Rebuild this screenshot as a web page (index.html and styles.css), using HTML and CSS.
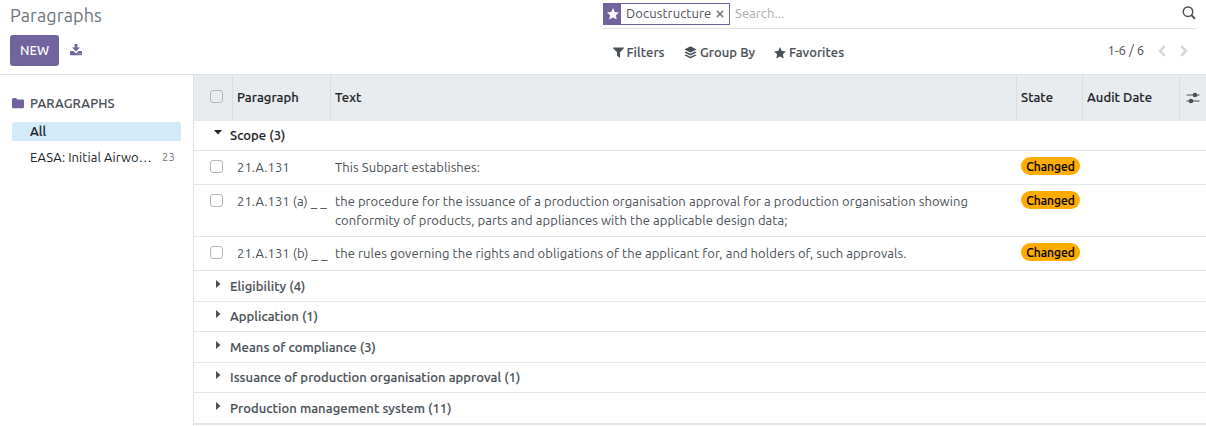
FILE: index.html
```html
<!DOCTYPE html>
<html lang="en">
<head>
<meta charset="utf-8">
<title>Paragraphs</title>
<link rel="stylesheet" href="styles.css">
</head>
<body>
<header class="control-panel">
  <div class="panel-left">
    <h1 class="title">Paragraphs</h1>
    <div class="actions">
      <button class="btn-new">NEW</button>
      <svg class="download" width="12" height="12" viewBox="0 0 12 12"><path fill="currentColor" d="M4.600 0h2.800v3.600h2.600L6 7.600 2 3.600h2.600zM.7 7h2.700L6 9.400 8.600 7h2.700q.7 0 .7.7v2.900q0 .7-.7.7H.7q-.7 0-.7-.7V7.700q0-.7.7-.7zm7.100 2.500v.8h.9v-.8zm1.900 0v.8h.9v-.8z"/></svg>
    </div>
  </div>
  <div class="panel-right">
    <div class="search">
      <div class="facet">
        <span class="facet-icon"><svg width="12" height="12" viewBox="0 0 12 12"><path fill="currentColor" d="M6 0 7.800 3.900l4.200.5-3.100 2.900.8 4.300L6 9.500l-3.700 2.100.8-4.300L0 4.400l4.200-.5z"/></svg></span>
        <span class="facet-label">Docustructure</span>
        <svg class="facet-close" width="8" height="8" viewBox="0 0 8 8"><path stroke="currentColor" stroke-width="1.600" d="m.9.9 6.200 6.200M7.100.9.9 7.100"/></svg>
      </div>
      <span class="placeholder">Search...</span>
      <svg class="magnifier" width="14" height="14" viewBox="0 0 14 14"><circle cx="6" cy="5.700" r="4.700" fill="none" stroke="currentColor" stroke-width="1.500"/><path stroke="currentColor" stroke-width="1.900" d="m9.300 9 3.800 3.800"/></svg>
    </div>
    <div class="toolbar">
      <div class="menu filters"><svg width="11" height="11" viewBox="0 0 11 11"><path fill="currentColor" d="M.4.500h10.200q.5.400.1.900L7 5.200v5.300q-.3.500-.8.100L4.200 8.800q-.2-.2-.2-.5V5.200L.3 1.400Q-.1.900.4.500z"/></svg><span>Filters</span></div>
      <div class="menu groupby"><svg width="13" height="13" viewBox="0 0 13 13"><path fill="currentColor" d="M6.500.3 12.600 3.500 6.500 6.600.4 3.500zM2 5.500l4.500 2.300L11 5.500l1.600.9-6.100 3.100L.4 6.400zM2 8.400l4.500 2.300L11 8.400l1.600.9-6.100 3.200L.4 9.300z"/></svg><span>Group By</span></div>
      <div class="menu favorites"><svg width="12" height="12" viewBox="0 0 12 12"><path fill="currentColor" d="M6 0 7.800 3.900l4.200.5-3.100 2.900.8 4.300L6 9.500l-3.700 2.100.8-4.300L0 4.400l4.200-.5z"/></svg><span>Favorites</span></div>
      <div class="pager">
        <span class="pager-text">1-6 / 6</span>
        <svg width="8" height="12" viewBox="0 0 8 12"><path fill="none" stroke="currentColor" stroke-width="2.600" d="M6.800 1.200 2 6l4.800 4.800"/></svg>
        <svg width="8" height="12" viewBox="0 0 8 12"><path fill="none" stroke="currentColor" stroke-width="2.600" d="M1.200 1.200 6 6l-4.800 4.800"/></svg>
      </div>
    </div>
  </div>
</header>
<div class="content">
  <aside class="sidebar">
    <div class="section"><svg width="12" height="11" viewBox="0 0 12 11"><path fill="currentColor" d="M1.300 0h2.400q1.300 0 1.300 1.500h5.700q1.300 0 1.300 1.300v6q0 1.500-1.300 1.500H1.300Q0 10.300 0 8.800V1.500Q0 0 1.300 0z"/></svg><span>PARAGRAPHS</span></div>
    <div class="category active"><span>All</span></div>
    <div class="category"><span class="category-name">EASA: Initial Airwo…</span><span class="count">23</span></div>
  </aside>
  <main class="list">
    <table class="table">
      <colgroup><col class="c-check"><col class="c-par"><col class="c-text"><col class="c-state"><col class="c-date"><col class="c-opt"></colgroup>
      <thead>
        <tr>
          <th class="check-cell"><span class="checkbox"></span></th>
          <th>Paragraph</th><th>Text</th><th>State</th><th>Audit Date</th>
          <th class="opt-cell"><svg width="14" height="12" viewBox="0 0 14 12"><path stroke="currentColor" stroke-width="1.200" d="M.5 3h13M.5 9h13"/><circle cx="9" cy="3" r="2.300" fill="currentColor"/><circle cx="5" cy="9" r="2.300" fill="currentColor"/></svg></th>
        </tr>
      </thead>
      <tbody>
        <tr class="group open"><td colspan="6"><div class="group-head"><svg class="caret" width="8" height="8" viewBox="0 0 8 8"><path fill="currentColor" d="M0 1h8L4 5.500z"/></svg><span>Scope (3)</span></div></td></tr>
        <tr class="record"><td class="check-cell"><span class="checkbox"></span></td><td>21.A.131</td><td>This Subpart establishes:</td><td><span class="badge">Changed</span></td><td></td><td></td></tr>
        <tr class="record tall"><td class="check-cell"><span class="checkbox"></span></td><td>21.A.131 (a) _ _</td><td>the procedure for the issuance of a production organisation approval for a production organisation showing<br>conformity of products, parts and appliances with the applicable design data;</td><td><span class="badge">Changed</span></td><td></td><td></td></tr>
        <tr class="record"><td class="check-cell"><span class="checkbox"></span></td><td>21.A.131 (b) _ _</td><td>the rules governing the rights and obligations of the applicant for, and holders of, such approvals.</td><td><span class="badge">Changed</span></td><td></td><td></td></tr>
        <tr class="group"><td colspan="6"><div class="group-head"><svg class="caret" width="8" height="8" viewBox="0 0 8 8"><path fill="currentColor" d="M2 0v8l4.500-4z"/></svg><span>Eligibility (4)</span></div></td></tr>
        <tr class="group short"><td colspan="6"><div class="group-head"><svg class="caret" width="8" height="8" viewBox="0 0 8 8"><path fill="currentColor" d="M2 0v8l4.500-4z"/></svg><span>Application (1)</span></div></td></tr>
        <tr class="group"><td colspan="6"><div class="group-head"><svg class="caret" width="8" height="8" viewBox="0 0 8 8"><path fill="currentColor" d="M2 0v8l4.500-4z"/></svg><span>Means of compliance (3)</span></div></td></tr>
        <tr class="group short"><td colspan="6"><div class="group-head"><svg class="caret" width="8" height="8" viewBox="0 0 8 8"><path fill="currentColor" d="M2 0v8l4.500-4z"/></svg><span>Issuance of production organisation approval (1)</span></div></td></tr>
        <tr class="group last"><td colspan="6"><div class="group-head"><svg class="caret" width="8" height="8" viewBox="0 0 8 8"><path fill="currentColor" d="M2 0v8l4.500-4z"/></svg><span>Production management system (11)</span></div></td></tr>
      </tbody>
    </table>
  </main>
</div>
</body>
</html>
```
FILE: styles.css
```css
* { box-sizing: border-box; }
body {
  margin: 0;
  height: 426px;
  overflow: hidden;
  background: #fff;
  color: #495057;
  font: 400 13px/19px "Ubuntu", "Noto Sans", "Open Sans", sans-serif;
  letter-spacing: 0.067px;
}
svg { display: block; flex: none; }
.control-panel {
  display: flex;
  height: 75px;
  border-bottom: 1px solid #dee2e6;
}
.panel-left { width: 603px; padding: 4px 0 0 10px; }
.title { margin: 0; color: #6c757d; font-size: 18px; line-height: 23px; font-weight: 400; letter-spacing: 0.1px; }
.actions { display: flex; align-items: center; margin-top: 8px; color: #71639e; }
.btn-new {
  width: 49px; height: 31px; padding: 0; border: 0; border-radius: 3px;
  background: #71639e; color: #fff;
  font: 500 13px/31px "Ubuntu", "Noto Sans", sans-serif;
}
.download { margin: -2px 0 0 11px; }
.panel-right { width: 593px; }
.search {
  display: flex; align-items: center;
  height: 29px; padding-bottom: 1px;
  border-bottom: 1px solid #dee2e6;
}
.facet { display: flex; align-items: center; width: 127px; height: 22px; border: 1px solid #71639e; }
.facet-icon { display: flex; align-items: center; justify-content: center; width: 17px; height: 20px; background: #71639e; color: #fff; }
.facet-label { width: 86px; margin-left: 5px; white-space: nowrap; letter-spacing: 0.1px; }
.facet-close { margin-left: 4px; color: #7c8187; }
.placeholder { margin-left: 5px; color: #a7acb1; }
.magnifier { margin-left: auto; margin-top: -2px; }
.toolbar { display: flex; align-items: center; height: 46px; padding: 1px 0 0 10px; }
.menu { display: flex; align-items: center; font-weight: 500; white-space: nowrap; gap: 3px; -webkit-text-stroke: 0.15px; }
.filters { width: 71px; gap: 2.500px; }
.groupby { width: 90px; }
.pager { display: flex; align-items: center; margin: -4px 8px 0 auto; gap: 14px; color: #d5d8dc; }
.pager-text { color: #495057; letter-spacing: 0; }
.content { display: flex; height: 351px; }
.sidebar { width: 193px; padding: 19px 12px 0; color: #212529; }
.section { display: flex; align-items: center; gap: 6px; height: 19px; color: #495057; font-weight: 500; letter-spacing: 0.1px; -webkit-text-stroke: 0.1px; }
.section svg { color: #71639e; }
.category { display: flex; align-items: center; height: 19px; margin-top: 7px; padding: 0 6px 0 18px; white-space: nowrap; }
.category.active { margin-top: 9px; background: #d3ebf9; border-radius: 3px 3px 0 0; font-weight: 500; -webkit-text-stroke: 0.15px; }
.category-name { letter-spacing: 0.067px; }
.count { margin-left: auto; color: #6c757d; font-size: 11px; letter-spacing: 0.3px; }
.list { flex: 1; border-left: 1px solid #dee2e6; }
.table { width: 1012px; table-layout: fixed; border-collapse: separate; border-spacing: 0; }
.c-check { width: 39px; }
.c-par { width: 98px; }
.c-text { width: 686px; }
.c-state { width: 66px; }
.c-date { width: 97px; }
.c-opt { width: 26px; }
.table th {
  height: 46px; padding: 0 4px 1px; text-align: left; vertical-align: middle;
  background: #e9ecef; border-right: 1px solid #dadee3;
  color: #212529; font-weight: 500; white-space: nowrap; -webkit-text-stroke: 0.15px;
}
.table .opt-cell { padding: 0 0 1px 6px; border-right: 0; color: #495057; }
.table td { padding: 7px 0 0 4px; vertical-align: top; border-bottom: 1px solid #e4e7ea; white-space: nowrap; }
.record { height: 34px; }
.record.tall { height: 52px; }
.table .check-cell { padding-left: 16px; }
.checkbox { display: block; width: 13px; height: 13px; margin-top: 2px; border: 1px solid #b4b6b9; border-radius: 3px; background: #fff; }
th .checkbox { margin-top: -2px; background: transparent; }
.badge {
  display: block; width: 59px; height: 18px; margin-top: -1px;
  border-radius: 9px; background: #ffac00; color: #000;
  font-size: 12px; line-height: 19px; font-weight: 500; text-align: center;
  letter-spacing: 0; -webkit-text-stroke: 0.15px;
}
.group { height: 31px; font-weight: 500; }
.group.open { height: 30px; color: #212529; }
.group.short { height: 30px; }
.table .group td { padding: 6px 0 0 20px; }
.table .group.short td, .table .group.open td { padding-top: 5px; }
.group-head { display: flex; gap: 8px; letter-spacing: 0.08px; }
.group-head span { -webkit-text-stroke: 0.15px; }
.caret { margin-top: 3px; }
.table .group.last td { border-bottom: 2px solid #e4e7ea; }
.group.last { height: 32px; }
```
